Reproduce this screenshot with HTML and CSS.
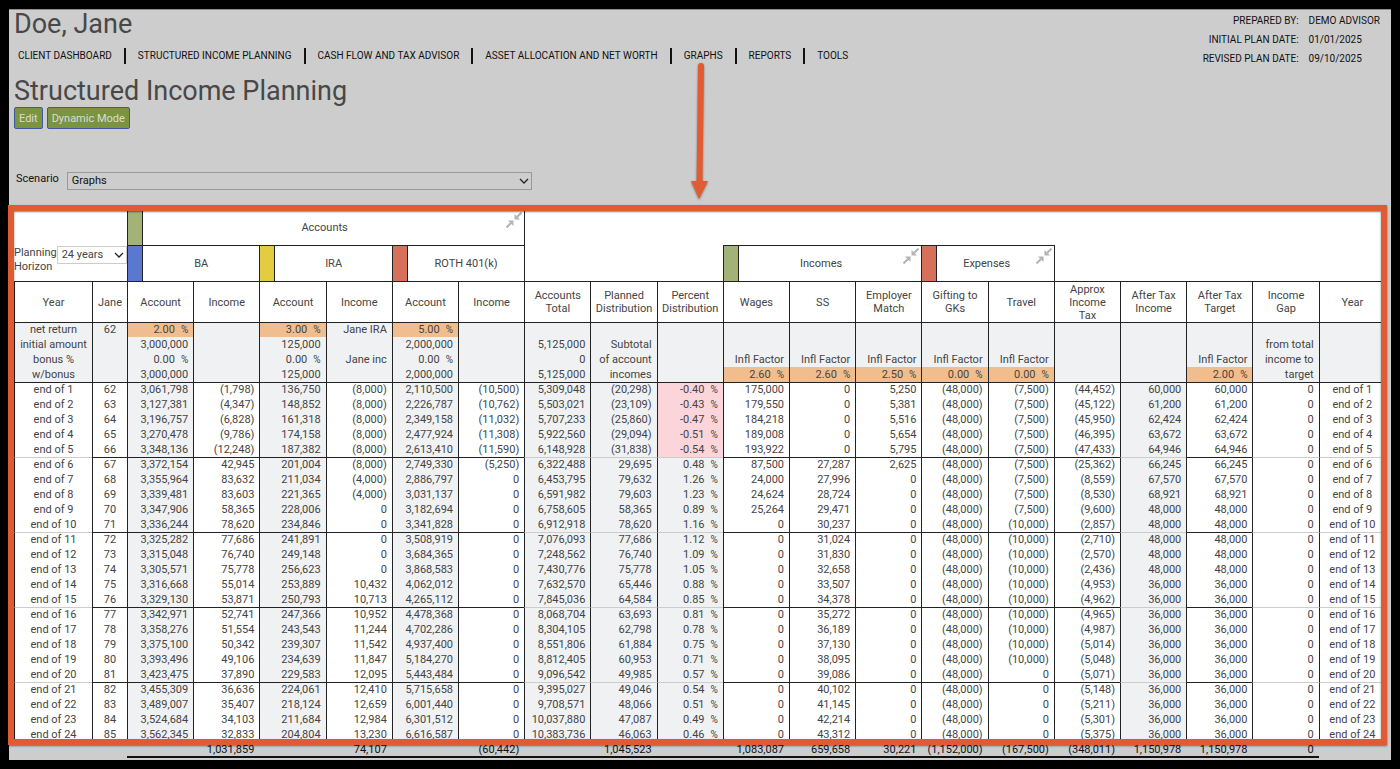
FILE: index.html
```html
<!DOCTYPE html>
<html lang="en">
<head>
    <meta charset="UTF-8">
    <meta name="viewport" content="width=device-width, initial-scale=1.0">
    <title>Structured Income Planning - Doe, Jane</title>
    <link rel="stylesheet" href="styles.css">
</head>
<body>
    <main class="panel">
        <header class="page-header">
            <div class="header-left">
                <h1>Doe, Jane</h1>
                <nav>
                    <ul class="nav-links">
                        <li><a href="#dashboard">CLIENT DASHBOARD</a></li>
                        <li><a href="#income">STRUCTURED INCOME PLANNING</a></li>
                        <li><a href="#cashflow">CASH FLOW AND TAX ADVISOR</a></li>
                        <li><a href="#assets">ASSET ALLOCATION AND NET WORTH</a></li>
                        <li class="nav-current">
                            <a href="#graphs">GRAPHS</a>
                            <svg class="pointer-arrow" width="24" height="140" viewBox="0 0 24 140" aria-hidden="true">
                                <path d="M14 4 L12.500 122" stroke="#e05c33" stroke-width="6" stroke-linecap="round" fill="none"/>
                                <path d="M4 119 L21 119 L12 137 Z" fill="#e05c33"/>
                            </svg>
                        </li>
                        <li><a href="#reports">REPORTS</a></li>
                        <li><a href="#tools">TOOLS</a></li>
                    </ul>
                </nav>
            </div>
            <dl class="plan-info">
                <dt>PREPARED BY:</dt><dd>DEMO ADVISOR</dd>
                <dt>INITIAL PLAN DATE:</dt><dd>01/01/2025</dd>
                <dt>REVISED PLAN DATE:</dt><dd>09/10/2025</dd>
            </dl>
        </header>

        <h2>Structured Income Planning</h2>
        <div class="actions">
            <button type="button" class="btn">Edit</button>
            <button type="button" class="btn">Dynamic Mode</button>
        </div>

        <div class="scenario">
            <label for="scenario">Scenario</label>
            <div class="select-wrap">
                <select id="scenario" name="scenario">
                    <option>Graphs</option>
                </select>
                <svg class="chevron" width="10" height="6" viewBox="0 0 10 6" aria-hidden="true"><path d="M1 1 L5 5 L9 1"/></svg>
            </div>
        </div>

        <section class="plan">
            <table class="plan-table">
                <colgroup>
                    <col class="col-year">
                    <col class="col-age">
                    <col span="19">
                </colgroup>
                <thead>
                    <tr class="group-row">
                        <th colspan="2" rowspan="2" class="horizon">
                            <div class="horizon-box">
                                <label for="horizon">Planning<br>Horizon</label>
                                <div class="select-wrap">
                                    <select id="horizon" name="horizon">
                                        <option>24 years</option>
                                    </select>
                                    <svg class="chevron" width="10" height="6" viewBox="0 0 10 6" aria-hidden="true"><path d="M1 1 L5 5 L9 1"/></svg>
                                </div>
                            </div>
                        </th>
                        <th colspan="6" class="line-left">
                            <div class="group"><span class="swatch green"></span><span class="group-name">Accounts</span>
                                <button type="button" class="collapse" aria-label="Collapse accounts"><svg width="16" height="16" viewBox="0 0 16 16"><path d="M15.500 .5 L11 5 M.5 15.500 L5 11" /><path class="head" d="M8.500 2 V7.500 H14 Z M7.500 14 V8.500 H2 Z"/></svg></button>
                            </div>
                        </th>
                        <th colspan="13" class="line-left"></th>
                    </tr>
                    <tr class="name-row">
                        <th colspan="2" class="line-left line-top"><div class="group"><span class="swatch blue"></span><span class="group-name">BA</span></div></th>
                        <th colspan="2" class="line-left line-top"><div class="group"><span class="swatch yellow"></span><span class="group-name">IRA</span></div></th>
                        <th colspan="2" class="line-left line-top"><div class="group"><span class="swatch red"></span><span class="group-name">ROTH 401(k)</span></div></th>
                        <th colspan="3" class="line-left"></th>
                        <th colspan="3" class="line-left line-top">
                            <div class="group"><span class="swatch green"></span><span class="group-name">Incomes</span>
                                <button type="button" class="collapse" aria-label="Collapse incomes"><svg width="16" height="16" viewBox="0 0 16 16"><path d="M15.500 .5 L11 5 M.5 15.500 L5 11" /><path class="head" d="M8.500 2 V7.500 H14 Z M7.500 14 V8.500 H2 Z"/></svg></button>
                            </div>
                        </th>
                        <th colspan="2" class="line-left line-top">
                            <div class="group"><span class="swatch red"></span><span class="group-name">Expenses</span>
                                <button type="button" class="collapse" aria-label="Collapse expenses"><svg width="16" height="16" viewBox="0 0 16 16"><path d="M15.500 .5 L11 5 M.5 15.500 L5 11" /><path class="head" d="M8.500 2 V7.500 H14 Z M7.500 14 V8.500 H2 Z"/></svg></button>
                            </div>
                        </th>
                        <th colspan="5" class="line-left"></th>
                    </tr>
                    <tr class="head-row">
                        <th>Year</th>
                        <th>Jane</th>
                        <th>Account</th>
                        <th>Income</th>
                        <th>Account</th>
                        <th>Income</th>
                        <th>Account</th>
                        <th>Income</th>
                        <th>Accounts<br>Total</th>
                        <th>Planned<br>Distribution</th>
                        <th>Percent<br>Distribution</th>
                        <th>Wages</th>
                        <th>SS</th>
                        <th>Employer<br>Match</th>
                        <th>Gifting to<br>GKs</th>
                        <th>Travel</th>
                        <th>Approx<br>Income<br>Tax</th>
                        <th>After Tax<br>Income</th>
                        <th>After Tax<br>Target</th>
                        <th>Income<br>Gap</th>
                        <th>Year</th>
                    </tr>
                </thead>
                <tbody id="setup" class="setup"></tbody>
                <tbody id="years" class="years"></tbody>
                <tfoot id="totals"></tfoot>
            </table>
        </section>
    </main>
    <script src="script.js"></script>
</body>
</html>
```
FILE: styles.css
```css
/* Reset & Base Styles */
* {
    box-sizing: border-box;
}

body {
    margin: 0;
    padding: 9px;
    background: #000;
    color: #111;
    font-family: Roboto, Arial, sans-serif;
    font-size: 11px;
}

h1, h2, ul, dl, dd {
    margin: 0;
    padding: 0;
}

.panel {
    background: #cdcdcd;
    border-top: 1px solid #8e8e8e;
    padding: 0 6px 2px 5px;
}

/* Header */
.page-header {
    display: flex;
    justify-content: space-between;
}

h1, h2 {
    font-size: 27px;
    font-weight: 400;
    line-height: 28px;
    color: #484848;
}

.nav-links {
    display: flex;
    list-style: none;
    margin-top: 10px;
    padding-left: 4px;
    font-size: 10px;
}

.nav-links li {
    position: relative;
    line-height: 14px;
}

.nav-links li + li {
    margin-left: 12px;
    padding-left: 12px;
    border-left: 2px solid #111;
}

.nav-links a {
    color: #111;
    text-decoration: none;
    line-height: 16px;
}

.pointer-arrow {
    position: absolute;
    left: 15px;
    top: 14px;
    z-index: 2;
    filter: drop-shadow(0 1px 1px rgba(0, 0, 0, 0.4));
}

.plan-info {
    display: grid;
    grid-template-columns: auto auto;
    column-gap: 10px;
    align-content: start;
    padding: 1px 5px 0 0;
    font-size: 10px;
    line-height: 19px;
}

.plan-info dt {
    text-align: right;
}

h2 {
    margin-top: 9px;
}

/* Buttons */
.actions {
    display: flex;
    gap: 4px;
    margin-top: 2px;
}

.btn {
    height: 22px;
    padding: 0 4px;
    background: #7a9440;
    border: 1px solid #3c58a0;
    border-radius: 2px;
    color: #dcdcd4;
    font: 11px Roboto, Arial, sans-serif;
}

/* Selects */
.scenario {
    display: flex;
    gap: 8px;
    margin: 43px 0 20px 2px;
    line-height: 14px;
}

.select-wrap {
    position: relative;
}

.scenario .select-wrap {
    width: 34%;
}

.select-wrap select {
    display: block;
    width: 100%;
    height: 18px;
    padding: 0 4px;
    appearance: none;
    background: transparent;
    border: 1px solid #999;
    border-radius: 0;
    color: inherit;
    font: inherit;
}

.chevron {
    position: absolute;
    right: 3px;
    top: 6px;
    pointer-events: none;
}

.chevron path {
    fill: none;
    stroke: #222;
    stroke-width: 1.3;
}

/* Plan table */
.plan {
    position: relative;
}

/* highlight frame around the projection */
.plan::after {
    content: "";
    position: absolute;
    top: -5px;
    right: -2px;
    bottom: 13px;
    left: -6px;
    border: 6px solid #df5b34;
    box-shadow: 0 1px 2px rgba(0, 0, 0, 0.5), inset 0 1px 2px rgba(0, 0, 0, 0.5);
    pointer-events: none;
}

.plan-table {
    width: 100%;
    table-layout: fixed;
    border-collapse: separate;
    border-spacing: 0;
    color: #444;
}

.col-year {
    width: 78px;
}

.col-age {
    width: 35px;
}

th, td {
    padding: 0;
    font-weight: 400;
}

thead th {
    background: #fff;
}

.line-left {
    border-left: 1px solid #222;
}

.line-top {
    border-top: 1px solid #222;
}

.group-row {
    height: 35px;
}

.name-row {
    height: 36px;
}

.group {
    display: flex;
    align-items: center;
    height: 35px;
}

.swatch {
    align-self: stretch;
    width: 15px;
    border-right: 1px solid #222;
}

.green { background: #a3b377; }
.blue { background: #5b78d0; }
.yellow { background: #e3cc40; }
.red { background: #d6705a; }

.group-name {
    flex: 1;
    text-align: center;
}

.collapse {
    align-self: flex-start;
    width: 16px;
    height: 16px;
    margin: 2px 2px 0 0;
    padding: 0;
    border: 0;
    background: none;
}

.collapse svg {
    display: block;
}

.collapse path {
    fill: none;
    stroke: #b4b4b4;
    stroke-width: 2;
}

.collapse .head {
    fill: #b4b4b4;
    stroke: none;
}

.horizon {
    vertical-align: bottom;
    text-align: left;
}

.horizon-box {
    display: flex;
    line-height: 14px;
    padding-bottom: 7px;
}

.horizon-box .select-wrap {
    flex: 1;
}

.horizon-box select {
    border-color: #ccc;
}

.head-row {
    height: 41px;
}

.head-row th {
    border-top: 1px solid #222;
    border-left: 1px solid #222;
    line-height: 13px;
}

/* Body rows */
tbody td, tbody th {
    height: 15px;
    padding-right: 5px;
    background: #fff;
    border-left: 1px solid #222;
    line-height: 14px;
    text-align: right;
    white-space: nowrap;
}

tbody .center {
    padding-right: 0;
    text-align: center;
}

tbody .shaded, .setup td, .setup th {
    background: #eff1f3;
}

.first td, .first th {
    border-top: 1px solid #222;
}

.years .first:not(:first-child) .light {
    border-top-color: #ccc;
}

.setup .factor {
    background: #f0be8e;
}

.years .negative {
    background: #fbd5da;
}

.percent {
    margin-left: 6px;
    font-size: 10px;
}

/* Totals */
tfoot td {
    height: 16px;
    padding-right: 5px;
    border-bottom: 2px solid #111;
    color: #111;
    line-height: 12px;
    text-align: right;
    vertical-align: bottom;
    white-space: nowrap;
}

tfoot .blank {
    border-bottom: 0;
}
```
FILE: script.js
```js
const LIGHT = [0, 8, 9, 10, 17, 19, 20];
const SHADED = [2, 4, 6, 8, 9, 10, 17];

// "*" marks an assumption cell, "|" separates columns
const setup = [
    "net return|62|*2.00%||*3.00%|Jane IRA|*5.00%||||||||||||||",
    "initial amount||3,000,000||125,000||2,000,000||5,125,000|Subtotal||||||||||from total|",
    "bonus %||0.00%||0.00%|Jane inc|0.00%||0|of account||Infl Factor|Infl Factor|Infl Factor|Infl Factor|Infl Factor|||Infl Factor|income to|",
    "w/bonus||3,000,000||125,000||2,000,000||5,125,000|incomes||*2.60%|*2.60%|*2.50%|*0.00%|*0.00%|||*2.00%|target|"
];

const years = [
    "3,061,798 (1,798) 136,750 (8,000) 2,110,500 (10,500) 5,309,048 (20,298) -0.40% 175,000 0 5,250 (48,000) (7,500) (44,452) 60,000 60,000 0",
    "3,127,381 (4,347) 148,852 (8,000) 2,226,787 (10,762) 5,503,021 (23,109) -0.43% 179,550 0 5,381 (48,000) (7,500) (45,122) 61,200 61,200 0",
    "3,196,757 (6,828) 161,318 (8,000) 2,349,158 (11,032) 5,707,233 (25,860) -0.47% 184,218 0 5,516 (48,000) (7,500) (45,950) 62,424 62,424 0",
    "3,270,478 (9,786) 174,158 (8,000) 2,477,924 (11,308) 5,922,560 (29,094) -0.51% 189,008 0 5,654 (48,000) (7,500) (46,395) 63,672 63,672 0",
    "3,348,136 (12,248) 187,382 (8,000) 2,613,410 (11,590) 6,148,928 (31,838) -0.54% 193,922 0 5,795 (48,000) (7,500) (47,433) 64,946 64,946 0",
    "3,372,154 42,945 201,004 (8,000) 2,749,330 (5,250) 6,322,488 29,695 0.48% 87,500 27,287 2,625 (48,000) (7,500) (25,362) 66,245 66,245 0",
    "3,355,964 83,632 211,034 (4,000) 2,886,797 0 6,453,795 79,632 1.26% 24,000 27,996 0 (48,000) (7,500) (8,559) 67,570 67,570 0",
    "3,339,481 83,603 221,365 (4,000) 3,031,137 0 6,591,982 79,603 1.23% 24,624 28,724 0 (48,000) (7,500) (8,530) 68,921 68,921 0",
    "3,347,906 58,365 228,006 0 3,182,694 0 6,758,605 58,365 0.89% 25,264 29,471 0 (48,000) (7,500) (9,600) 48,000 48,000 0",
    "3,336,244 78,620 234,846 0 3,341,828 0 6,912,918 78,620 1.16% 0 30,237 0 (48,000) (10,000) (2,857) 48,000 48,000 0",
    "3,325,282 77,686 241,891 0 3,508,919 0 7,076,093 77,686 1.12% 0 31,024 0 (48,000) (10,000) (2,710) 48,000 48,000 0",
    "3,315,048 76,740 249,148 0 3,684,365 0 7,248,562 76,740 1.09% 0 31,830 0 (48,000) (10,000) (2,570) 48,000 48,000 0",
    "3,305,571 75,778 256,623 0 3,868,583 0 7,430,776 75,778 1.05% 0 32,658 0 (48,000) (10,000) (2,436) 48,000 48,000 0",
    "3,316,668 55,014 253,889 10,432 4,062,012 0 7,632,570 65,446 0.88% 0 33,507 0 (48,000) (10,000) (4,953) 36,000 36,000 0",
    "3,329,130 53,871 250,793 10,713 4,265,112 0 7,845,036 64,584 0.85% 0 34,378 0 (48,000) (10,000) (4,962) 36,000 36,000 0",
    "3,342,971 52,741 247,366 10,952 4,478,368 0 8,068,704 63,693 0.81% 0 35,272 0 (48,000) (10,000) (4,965) 36,000 36,000 0",
    "3,358,276 51,554 243,543 11,244 4,702,286 0 8,304,105 62,798 0.78% 0 36,189 0 (48,000) (10,000) (4,987) 36,000 36,000 0",
    "3,375,100 50,342 239,307 11,542 4,937,400 0 8,551,806 61,884 0.75% 0 37,130 0 (48,000) (10,000) (5,014) 36,000 36,000 0",
    "3,393,496 49,106 234,639 11,847 5,184,270 0 8,812,405 60,953 0.71% 0 38,095 0 (48,000) (10,000) (5,048) 36,000 36,000 0",
    "3,423,475 37,890 229,583 12,095 5,443,484 0 9,096,542 49,985 0.57% 0 39,086 0 (48,000) 0 (5,071) 36,000 36,000 0",
    "3,455,309 36,636 224,061 12,410 5,715,658 0 9,395,027 49,046 0.54% 0 40,102 0 (48,000) 0 (5,148) 36,000 36,000 0",
    "3,489,007 35,407 218,124 12,659 6,001,440 0 9,708,571 48,066 0.51% 0 41,145 0 (48,000) 0 (5,211) 36,000 36,000 0",
    "3,524,684 34,103 211,684 12,984 6,301,512 0 10,037,880 47,087 0.49% 0 42,214 0 (48,000) 0 (5,301) 36,000 36,000 0",
    "3,562,345 32,833 204,804 13,230 6,616,587 0 10,383,736 46,063 0.46% 0 43,312 0 (48,000) 0 (5,375) 36,000 36,000 0"
];

const totals = "|||1,031,859||74,107||(60,442)||1,045,523||1,083,087|659,658|30,221|(1,152,000)|(167,500)|(348,011)|1,150,978|1,150,978|0|";

function addRow(parent, values, first) {
    const row = parent.insertRow();
    if (first) row.className = "first";
    values.forEach((value, i) => {
        const cell = document.createElement(i === 0 ? "th" : "td");
        if (i === 0) cell.scope = "row";
        if (i < 2 || i === 20) cell.classList.add("center");
        if (LIGHT.includes(i)) cell.classList.add("light");
        if (SHADED.includes(i)) cell.classList.add("shaded");
        if (value.startsWith("*")) {
            cell.classList.add("factor");
            value = value.slice(1);
        }
        if (value.startsWith("-")) cell.classList.add("negative");
        if (/\d%$/.test(value)) {
            cell.textContent = value.slice(0, -1);
            const sign = document.createElement("span");
            sign.className = "percent";
            sign.textContent = "%";
            cell.appendChild(sign);
        } else {
            cell.textContent = value;
        }
        row.appendChild(cell);
    });
}

setup.forEach((line, i) => addRow(document.getElementById("setup"), line.split("|"), i === 0));

years.forEach((line, i) => {
    const label = "end of " + (i + 1);
    const values = [label, String(62 + i), ...line.split(" "), label];
    addRow(document.getElementById("years"), values, i % 5 === 0);
});

const totalRow = document.getElementById("totals").insertRow();
totals.split("|").forEach((value, i) => {
    const cell = totalRow.insertCell();
    cell.textContent = value;
    if (i < 2 || i === 20) cell.className = "blank";
});
```
